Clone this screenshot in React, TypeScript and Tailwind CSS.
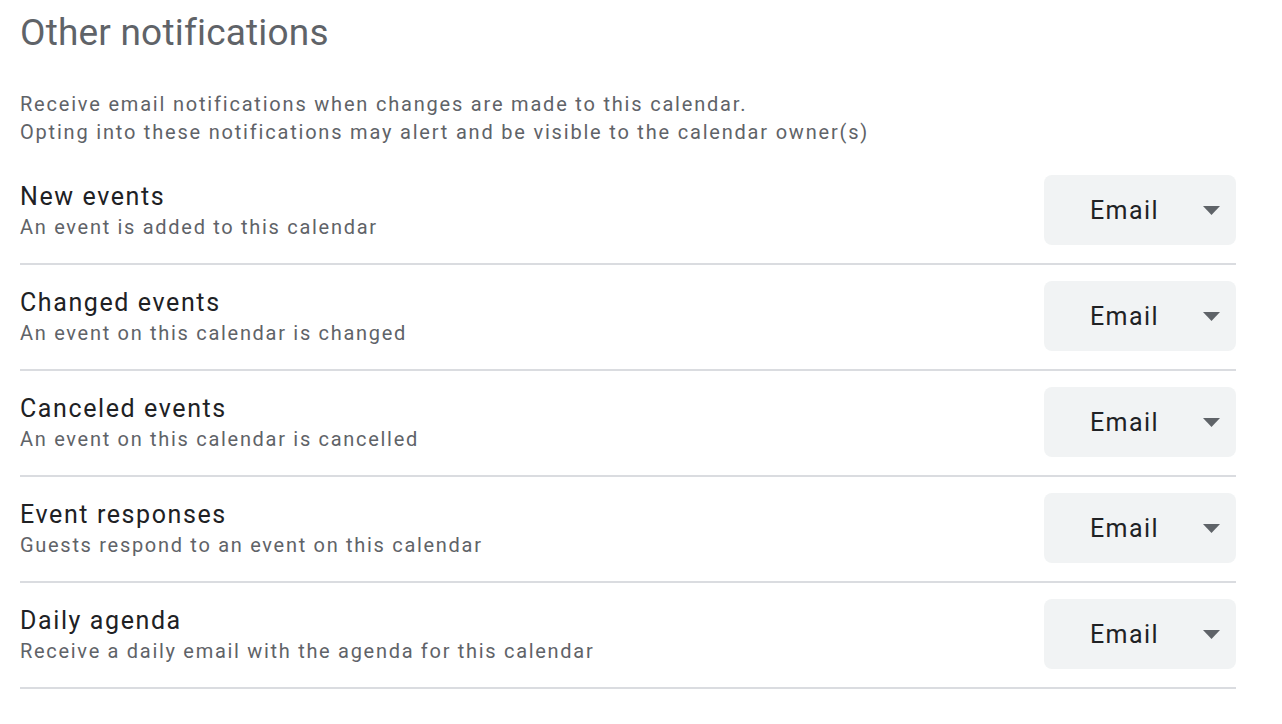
const rows = [
  { title: "New events", sub: "An event is added to this calendar" },
  { title: "Changed events", sub: "An event on this calendar is changed" },
  { title: "Canceled events", sub: "An event on this calendar is cancelled" },
  { title: "Event responses", sub: "Guests respond to an event on this calendar" },
  { title: "Daily agenda", sub: "Receive a daily email with the agenda for this calendar" },
];

function EmailSelect() {
  return (
    <div className="flex h-[70px] w-[192px] items-center rounded-lg bg-[#f1f3f4] pl-[46px] pr-[16px]">
      <span className="flex-1 text-[25px] leading-none tracking-[1.4px] text-[#202124]">Email</span>
      <svg width="17" height="9" viewBox="0 0 17 9">
        <path d="M0 0 L17 0 L8.5 9 Z" fill="#5f6368" />
      </svg>
    </div>
  );
}

export default function App() {
  return (
    <div className="min-h-screen bg-white px-[20px] pt-[11px] font-['Roboto',sans-serif]">
      <h2 className="text-[37px] leading-[44px] tracking-[0.2px] text-[#5f6368]">
        Other notifications
      </h2>
      <p className="mt-[35px] text-[20px] leading-[28px] tracking-[1.8px] text-[#5f6368]">
        Receive email notifications when changes are made to this calendar.
        <br />
        Opting into these notifications may alert and be visible to the calendar owner(s)
      </p>
      <div className="mt-[13px] w-[1216px]">
        {rows.map((r) => (
          <div key={r.title} className="flex items-center justify-between border-b-2 border-[#dadce0] pt-[16px] pb-[18px]">
            <div className="pt-[4px]">
              <div className="text-[25px] leading-[30px] tracking-[1.6px] text-[#202124]">{r.title}</div>
              <div className="text-[20px] leading-[30px] tracking-[1.7px] text-[#5f6368]">{r.sub}</div>
            </div>
            <EmailSelect />
          </div>
        ))}
      </div>
    </div>
  );
}
